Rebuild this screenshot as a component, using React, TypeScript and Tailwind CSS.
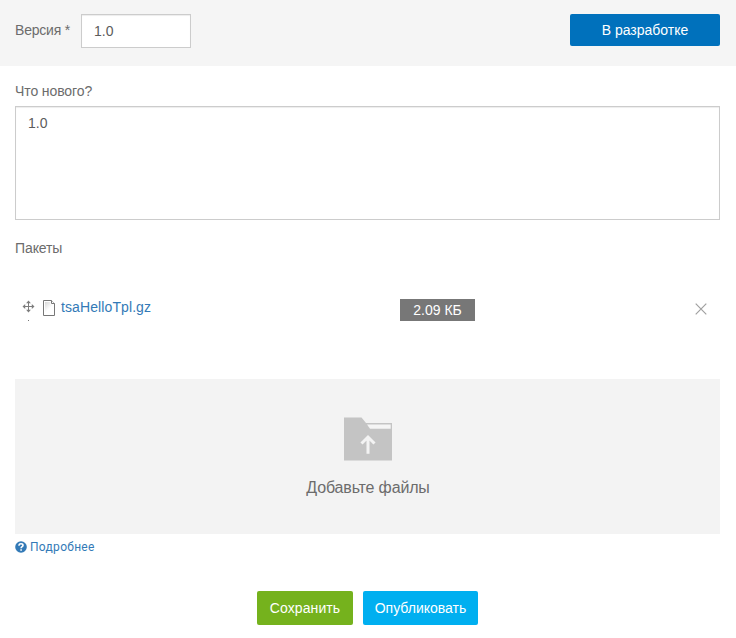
import React from "react";

const thin = "font-['Liberation_Sans',Arial,sans-serif] text-sm leading-5";

function MoveIcon() {
  return (
    <svg width="13" height="13" viewBox="0 0 13 13" className="block" fill="#7d7d7d">
      <path d="M6 2h1v9H6zM2 6h9v1H2z" />
      <path d="M6.5 .5L8.9 3.2H4.1ZM6.5 12.5L8.9 9.8H4.1ZM.5 6.5L3.2 4.1V8.9ZM12.5 6.5L9.8 4.1V8.9Z" />
    </svg>
  );
}

function FileIcon() {
  return (
    <svg width="12" height="16" viewBox="0 0 12 16" className="block">
      <defs>
        <linearGradient id="page" x1="0" y1="0" x2=".6" y2="1">
          <stop offset="0" stopColor="#d8d8d8" />
          <stop offset=".65" stopColor="#ffffff" />
        </linearGradient>
      </defs>
      <path d="M.5.5H8.5L11.5 3.5V15.5H.5Z" fill="#fff" stroke="#777" />
      <path d="M2 2H7.5V4.5H10V14H2Z" fill="url(#page)" />
      <path d="M8.5.5V3.5H11.5" fill="#fff" stroke="#777" />
    </svg>
  );
}

function FolderIcon() {
  return (
    <svg width="48" height="44" viewBox="0 0 48 44" className="block">
      <path d="M0 .5H17.5L22 6H48V43.5H0Z" fill="#c4c4c4" />
      <path d="M23 7.5H46.7V11.7H26Z" fill="#f5f5f5" />
      <path d="M24 36.8V20.5M17.5 26.5L24 20L30.5 26.5" fill="none" stroke="#f3f3f3" strokeWidth="3" />
    </svg>
  );
}

export default function App() {
  return (
    <main className={`h-[638px] w-[736px] overflow-hidden bg-white text-[#6c6c6c] ${thin}`}>
      <header className="flex h-[66px] items-start bg-[#f5f5f5] px-[15px] pr-4">
        <label htmlFor="version" className="mt-5 w-[66px] shrink-0 whitespace-nowrap tracking-[-0.2px]">Версия *</label>
        <input
          id="version"
          defaultValue="1.0"
          className="mt-3.5 h-[34px] w-[110px] border border-[#ccc] bg-white px-3 text-[#5c5c5c] shadow-[inset_0_1px_1px_rgba(0,0,0,0.075)] outline-none"
        />
        <button className="mt-3.5 ml-auto h-8 w-[150px] rounded-xs bg-[#0071bc] text-white">В разработке</button>
      </header>

      <section className="pr-4 pl-[15px]">
        <label htmlFor="news" className="mt-[15px] block tracking-[-0.1px]">Что нового?</label>
        <textarea
          id="news"
          defaultValue="1.0"
          className="mt-[5px] block h-[114px] w-full resize-none border border-[#ccc] px-3 py-1.5 text-[#5c5c5c] shadow-[inset_0_1px_1px_rgba(0,0,0,0.075)] outline-none"
        />
        <h2 className="mt-[18px] tracking-[-0.1px]">Пакеты</h2>

        <div className="mt-[39px] flex h-[82px] items-start">
          <div className="mt-[3px] ml-[7px] w-5 shrink-0">
            <MoveIcon />
            <div className="mt-[7px] ml-1.5 h-px w-px bg-[#777]" />
          </div>
          <div className="mt-[3px] ml-px w-[18px] shrink-0"><FileIcon /></div>
          <a className="w-[339px] tracking-[0.1px] text-[#337ab7]">tsaHelloTpl.gz</a>
          <span className="mt-[2px] h-[22px] w-[75px] bg-[#777] text-center leading-[22px] text-white">2.09 КБ</span>
          <svg width="12" height="12" viewBox="0 0 12 12" className="mt-[6px] mr-[13px] ml-auto" stroke="#a0a0a0" strokeWidth="1.2">
            <path d="M.7.7l10.6 10.6M11.3.7L.7 11.3" />
          </svg>
        </div>

        <div className="flex h-[155px] flex-col items-center bg-[#f3f3f3] pt-[38px]">
          <FolderIcon />
          <p className="mt-[15px] pl-px text-base leading-6 tracking-[-0.15px]">Добавьте файлы</p>
        </div>
        <a className="mt-1 flex h-[18px] items-center gap-[3px] font-['Roboto',sans-serif] text-xs tracking-[0.3px] text-[#337ab7]">
          <svg width="12" height="12" viewBox="0 0 12 12" className="block">
            <circle cx="6" cy="6" r="5.8" fill="#337ab7" />
            <path d="M4 4.7C4 3.3 4.8 2.8 6 2.8c1.2 0 2 .6 2 1.6C8 5.7 6.1 5.6 6.1 7.2M6.1 8.2v1.5" fill="none" stroke="#fff" strokeWidth="1.6" />
          </svg>
          Подробнее
        </a>
      </section>

      <footer className="mt-[35px] flex justify-center gap-2.5 pr-px text-white">
        <button className="h-[34px] w-24 rounded-xs bg-[#75b21d] tracking-[0.1px]">Сохранить</button>
        <button className="h-[34px] w-[115px] rounded-xs bg-[#00aff0]">Опубликовать</button>
      </footer>
    </main>
  );
}
